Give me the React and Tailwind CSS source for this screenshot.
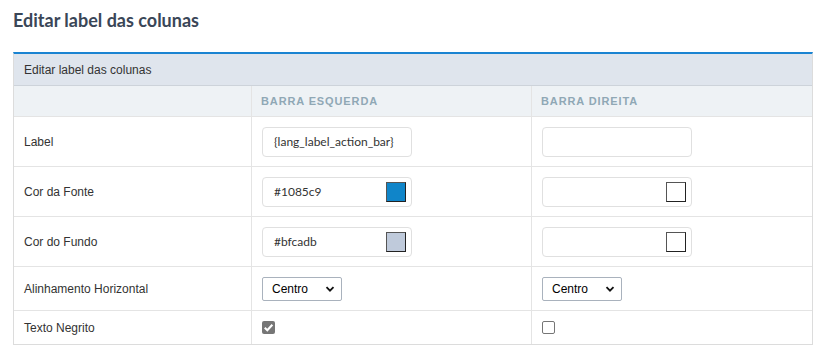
import React from "react";

const cell = "flex items-center border-t border-[#e4e4e4]";

function ColorInput({ value, color }) {
  return (
    <div className="w-[150px] h-[30px] rounded border border-[#e0e0e0] bg-white flex items-center justify-between pl-[11px] pr-[5px]">
      <span className="text-[12px] text-[#333] font-['Lato',sans-serif]">{value}</span>
      <span
        className={`w-[20px] h-[20px] border border-[#555] border-r-[#222] border-b-[#222] ${color}`}
      />
    </div>
  );
}

function TextInput({ value }) {
  return (
    <div className="w-[150px] h-[30px] rounded border border-[#e0e0e0] bg-white flex items-center pl-[11px]">
      <span className="text-[12px] text-[#333] font-['Lato',sans-serif]">{value}</span>
    </div>
  );
}

function Select() {
  return (
    <div className="w-[80px] h-[24px] rounded-[2px] border border-[#a9b2bd] bg-white flex items-center justify-between pl-[9px] pr-[6px]">
      <span className="text-[12px] text-black">Centro</span>
      <svg width="10" height="10" viewBox="0 0 10 10">
        <path d="M1.5 3.2 L5 6.7 L8.5 3.2" fill="none" stroke="#111" strokeWidth="1.8" />
      </svg>
    </div>
  );
}

function Checkbox({ checked }) {
  if (checked) {
    return (
      <span className="w-[13px] h-[13px] rounded-[2px] bg-[#767676] flex items-center justify-center">
        <svg width="11" height="11" viewBox="0 0 10 10">
          <path d="M1.6 5.3 L3.9 7.5 L8.5 2.5" fill="none" stroke="#fff" strokeWidth="1.9" />
        </svg>
      </span>
    );
  }
  return <span className="w-[13px] h-[13px] rounded-[2px] border border-[#767676] bg-white" />;
}

export default function App() {
  const rows = [
    { label: "Label", h: "h-[50px]", left: <TextInput value="{lang_label_action_bar}" />, right: <TextInput value="" /> },
    { label: "Cor da Fonte", h: "h-[50px]", left: <ColorInput value="#1085c9" color="bg-[#1085c9]" />, right: <ColorInput value="" color="bg-white" /> },
    { label: "Cor do Fundo", h: "h-[50px]", left: <ColorInput value="#bfcadb" color="bg-[#bfcadb]" />, right: <ColorInput value="" color="bg-white" /> },
    { label: "Alinhamento Horizontal", h: "h-[44px]", left: <Select />, right: <Select /> },
    { label: "Texto Negrito", h: "h-[34px]", left: <Checkbox checked />, right: <Checkbox /> },
  ];

  return (
    <div className="w-[823px] h-[358px] bg-white font-['Arial','Liberation_Sans',sans-serif] text-[#333]">
      <h1 className="pl-[13px] pt-[7px] h-[52px] text-[18px] font-bold text-[#3a4657] font-['Lato',sans-serif]">
        Editar label das colunas
      </h1>
      <div className="ml-[13px] w-[800px] border-t-2 border-t-[#1a84d2] border-x border-b border-x-[#dcdcdc] border-b-[#dcdcdc]">
        <div className="h-[32px] bg-[#dfe5ed] flex items-center pl-[10px] text-[12px] text-[#333] border-b border-[#cdd3da]">
          Editar label das colunas
        </div>
        <div className="grid grid-cols-[238px_280px_1fr]">
          <div className="h-[30px] bg-[#eef2f5] border-r border-[#e4e4e4]" />
          <div className="h-[30px] bg-[#eef2f5] border-r border-[#e4e4e4] flex items-center pl-[9px] text-[11px] font-bold tracking-[0.08em] text-[#90a8b5]">
            BARRA ESQUERDA
          </div>
          <div className="h-[30px] bg-[#eef2f5] flex items-center pl-[9px] text-[11px] font-bold tracking-[0.08em] text-[#90a8b5]">
            BARRA DIREITA
          </div>
          {rows.map((r) => (
            <React.Fragment key={r.label}>
              <div className={`${cell} ${r.h} border-r pl-[10px] text-[12px] text-[#333]`}>{r.label}</div>
              <div className={`${cell} ${r.h} border-r pl-[10px]`}>{r.left}</div>
              <div className={`${cell} ${r.h} pl-[10px]`}>{r.right}</div>
            </React.Fragment>
          ))}
        </div>
      </div>
    </div>
  );
}
